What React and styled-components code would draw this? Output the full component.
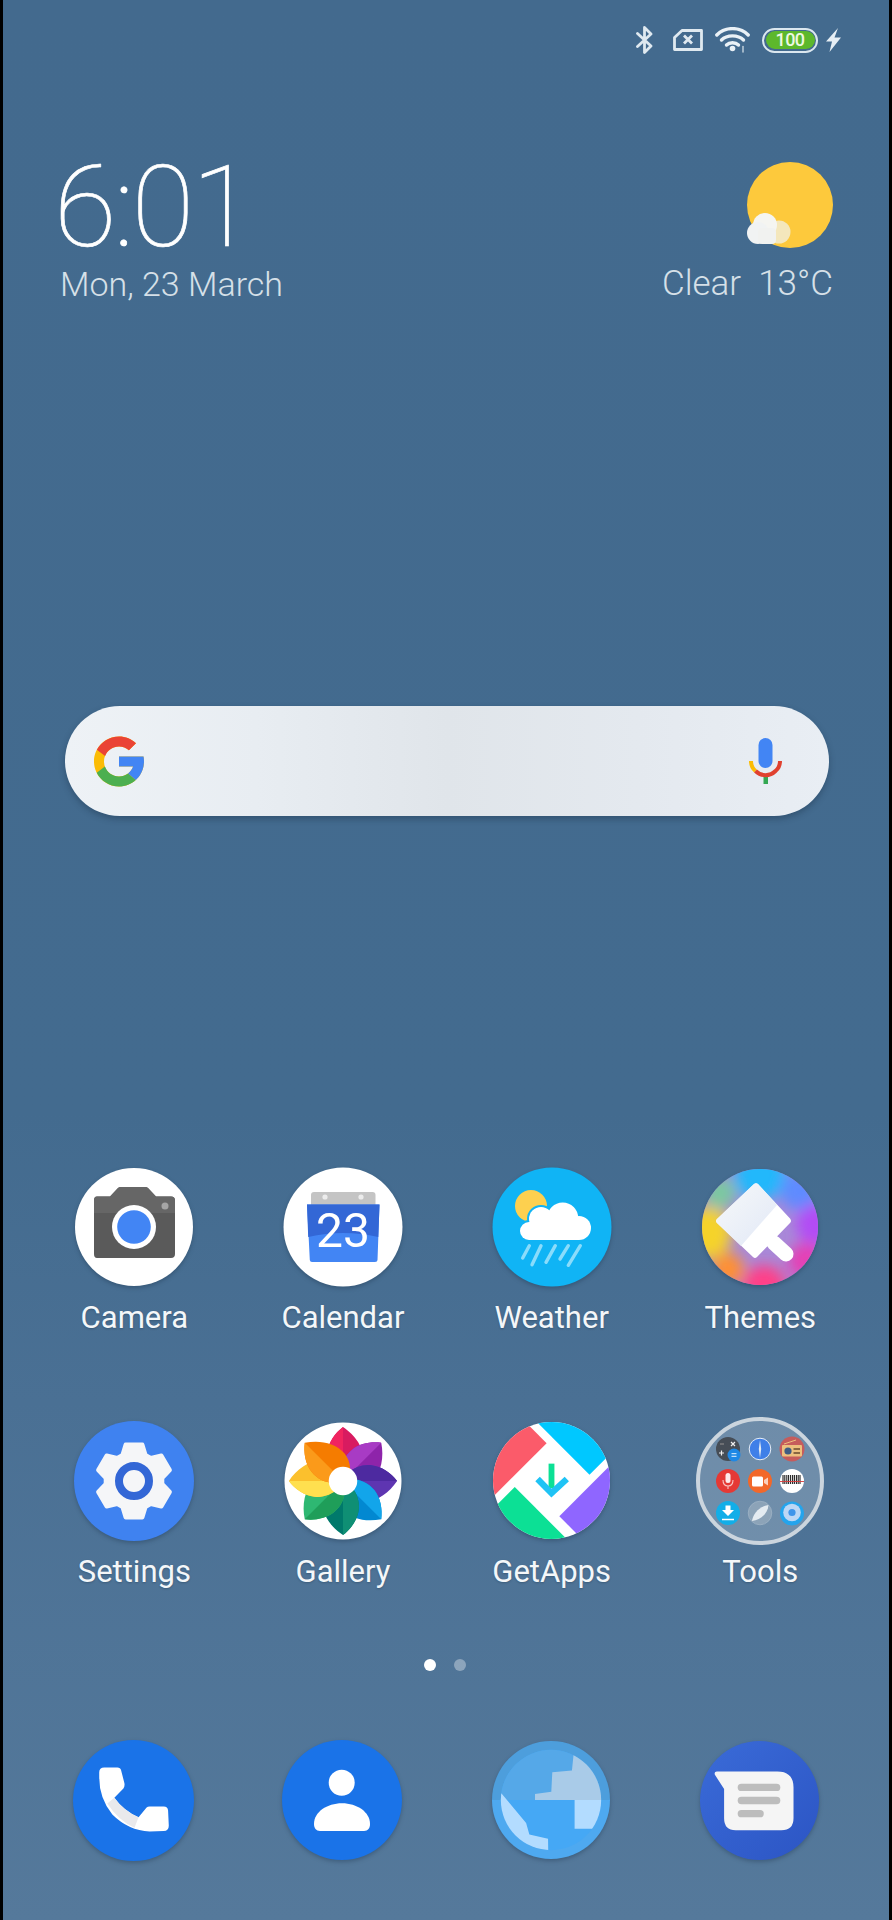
import React from 'react';
import styled, { createGlobalStyle } from 'styled-components';

const GlobalStyle = createGlobalStyle`
  html, body {
    margin: 0;
    padding: 0;
    background: #000;
  }
`;

const Screen = styled.div`
  width: 886px;
  height: 1920px;
  margin: 0 3px;
  overflow: hidden;
  font-family: Roboto, "Noto Sans", sans-serif;
  background: linear-gradient(180deg, #436a8e 0%, #436b8f 58%, #4a7094 73%, #55799b 100%);
`;

const StatusBar = styled.div`
  height: 80px;
  display: flex;
  justify-content: flex-end;
  align-items: center;
  gap: 12px;
  padding-right: 48px;
`;

const StatusIcon = styled.svg`
  display: block;
  flex: none;
  margin-right: ${(p) => p.$after || 0}px;
`;

const Battery = styled.div`
  width: 56px;
  height: 25px;
  box-sizing: border-box;
  border: 2.5px solid #dbe7ef;
  border-radius: 13px;
  padding: 1.5px;
  margin-right: -4px;
`;

const BatteryFill = styled.div`
  height: 100%;
  border-radius: 9px;
  background: #5db82c;
  color: #eef8e2;
  font-size: 18px;
  font-weight: 500;
  line-height: 17px;
  letter-spacing: -0.6px;
  text-align: center;
`;

const InfoRow = styled.div`
  display: flex;
  justify-content: space-between;
  padding: 72px 56px 0 51px;
`;

const ClockBlock = styled.div`
  display: flex;
  flex-direction: column;
`;

const Clock = styled.div`
  font-size: 114px;
  line-height: 110px;
  font-weight: 100;
  color: #fff;
  letter-spacing: -2.4px;
  -webkit-text-stroke: 0.7px #fff;
`;

const InfoText = styled.div`
  font-size: ${(p) => p.$size}px;
  line-height: 40px;
  font-weight: 300;
  color: #d6e0e8;
  white-space: pre;
  margin: ${(p) => p.$top || 0}px 0 0 ${(p) => p.$left || 0}px;
`;

const WeatherBlock = styled.div`
  display: flex;
  flex-direction: column;
  align-items: flex-end;
  padding-top: 10px;
`;

const SearchBar = styled.div`
  width: 764px;
  height: 110px;
  margin: 402px 0 0 62px;
  box-sizing: border-box;
  padding: 0 47px 0 29px;
  border-radius: 55px;
  display: flex;
  justify-content: space-between;
  align-items: center;
  background: linear-gradient(90deg, #eef2f6 0%, #e8edf2 25%, #e0e5ea 50%, #e4e9ef 75%, #e9eef4 100%);
  box-shadow: 0 3px 6px rgba(20, 40, 60, 0.35);
`;

const AppGrid = styled.div`
  display: grid;
  grid-template-columns: repeat(4, 208.67px);
  row-gap: 80.5px;
  margin: ${(p) => p.$top}px 0 0 ${(p) => p.$left}px;
`;

const AppCell = styled.div`
  display: flex;
  flex-direction: column;
  align-items: center;
`;

const IconSlot = styled.div`
  height: 128px;
  display: flex;
  align-items: center;
  justify-content: center;
`;

const AppIcon = styled.svg`
  display: block;
  overflow: visible;
  width: ${(p) => p.$size || 120}px;
  height: ${(p) => p.$size || 120}px;
  filter: ${(p) => (p.$flat ? 'none' : 'drop-shadow(0 2px 2px rgba(15, 35, 55, 0.3))')};
`;

const AppLabel = styled.div`
  margin-top: 9px;
  font-size: 31px;
  line-height: 36px;
  color: #f4f7f9;
  text-shadow: 0 1px 2px rgba(20, 40, 60, 0.3);
`;

const Dots = styled.div`
  display: flex;
  justify-content: center;
  gap: 18.5px;
  margin: 69.5px 0 0 -2px;
`;

const Dot = styled.div`
  width: 12px;
  height: 12px;
  border-radius: 50%;
  background: ${(p) => (p.$active ? '#fff' : 'rgba(255, 255, 255, 0.35)')};
`;

const gearPoints = (() => {
  const pts = [];
  for (let i = 0; i < 6; i++) {
    const a = -90 + 60 * i;
    [[-24, 28.5], [-13, 37.5], [13, 37.5], [24, 28.5]].forEach(([d, r]) => {
      const t = ((a + d) * Math.PI) / 180;
      pts.push(`${(60 + r * Math.cos(t)).toFixed(1)},${(60 + r * Math.sin(t)).toFixed(1)}`);
    });
  }
  return pts.join(' ');
})();

function BluetoothIcon() {
  return (
    <StatusIcon $after={8} width="17" height="28" viewBox="0 0 17 28" fill="none" stroke="#dfe9f0" strokeWidth="2.8" strokeLinejoin="round" strokeLinecap="round">
      <path d="M1.5 7.5 15 20 8.5 26.5V1.5L15 8 1.5 20.5" />
    </StatusIcon>
  );
}

function SimIcon() {
  return (
    <StatusIcon width="30" height="22" viewBox="0 0 30 22" fill="none" stroke="#dfe9f0" strokeWidth="2.8" strokeLinejoin="round">
      <path d="M9 1.5H28.5V20.5H1.5V8.5Z" />
      <path d="M11 6.5 19 14.5M19 6.5 11 14.5" />
    </StatusIcon>
  );
}

function WifiIcon() {
  return (
    <StatusIcon width="35" height="26" viewBox="0 0 35 26" fill="none" stroke="#eaf1f6" strokeWidth="3.4" strokeLinecap="round">
      <path d="M1.8 8C10 -0.5 25 -0.5 33.2 8" />
      <path d="M6.5 13C12 7.5 23 7.5 28.5 13" />
      <path d="M11.5 18C14.5 15 20.5 15 23.5 18" />
      <circle cx="17.5" cy="21.5" r="2.8" fill="#eaf1f6" stroke="none" />
      <path d="M28 19.5V25" strokeWidth="1.6" stroke="#b8c9d6" />
    </StatusIcon>
  );
}

function BoltIcon() {
  return (
    <StatusIcon width="15" height="24" viewBox="0 0 15 24" fill="#e6eef4">
      <path d="M12 0 0 13.5H6L3.5 24 15 9.5H8.5Z" />
    </StatusIcon>
  );
}

function SunIcon() {
  return (
    <svg width="86" height="86" viewBox="0 0 86 86" style={{ display: 'block' }}>
      <circle cx="43" cy="43" r="43" fill="#fdc93c" />
      <circle cx="32" cy="70" r="11.5" fill="#f2ecd2" opacity="0.85" />
      <circle cx="18" cy="63" r="12" fill="#f5f5f1" />
      <circle cx="11" cy="71" r="11" fill="#f1f3f3" />
      <rect x="11" y="66" width="18" height="16" rx="4" fill="#f1f2f0" />
    </svg>
  );
}

function GoogleLogo() {
  return (
    <svg width="50" height="51" viewBox="4 4 40 40" style={{ display: 'block' }}>
      <path fill="#fbbc05" d="M43.611,20.083H42V20H24v8h11.303c-1.649,4.657-6.08,8-11.303,8c-6.627,0-12-5.373-12-12c0-6.627,5.373-12,12-12c3.059,0,5.842,1.154,7.961,3.039l5.657-5.657C34.046,6.053,29.268,4,24,4C12.955,4,4,12.955,4,24c0,11.045,8.955,20,20,20c11.045,0,20-8.955,20-20C44,22.659,43.862,21.35,43.611,20.083z" />
      <path fill="#ea4335" d="M6.306,14.691l6.571,4.819C14.655,15.108,18.961,12,24,12c3.059,0,5.842,1.154,7.961,3.039l5.657-5.657C34.046,6.053,29.268,4,24,4C16.318,4,9.656,8.337,6.306,14.691z" />
      <path fill="#4caf50" d="M24,44c5.166,0,9.86-1.977,13.409-5.192l-6.19-5.238C29.211,35.091,26.715,36,24,36c-5.202,0-9.619-3.317-11.283-7.946l-6.522,5.025C9.505,39.556,16.227,44,24,44z" />
      <path fill="#4285f4" d="M43.611,20.083H42V20H24v8h11.303c-0.792,2.237-2.231,4.166-4.087,5.571c0.001-0.001,0.002-0.001,0.003-0.002l6.19,5.238C36.971,39.205,44,34,44,24C44,22.659,43.862,21.35,43.611,20.083z" />
    </svg>
  );
}

function MicIcon() {
  return (
    <svg width="33" height="46" viewBox="0 0 33 46" style={{ display: 'block' }}>
      <rect x="14.5" y="36" width="4.5" height="10" fill="#34a853" />
      <path d="M2 23C2 27 3.5 30.5 6.5 33" fill="none" stroke="#fbbc05" strokeWidth="4" />
      <path d="M6.5 33C12 38.5 21 38.5 26.5 33C29.5 30.5 31 27 31 23" fill="none" stroke="#e0412f" strokeWidth="4" />
      <rect x="9.5" y="0" width="14" height="30" rx="7" fill="#4285f4" />
    </svg>
  );
}

function CameraIcon() {
  return (
    <AppIcon viewBox="0 0 120 120">
      <circle cx="60" cy="60" r="59" fill="#fff" />
      <path d="M23 29.5H36L44 21Q45 20 47 20H71Q73 20 74 21L82 29.5H97Q101 29.5 101 33.5V87Q101 91 97 91H23Q20 91 20 87V33.5Q20 29.5 23 29.5Z" fill="#5a5a5a" />
      <path d="M23 29.5H36L44 21Q45 20 47 20H71Q73 20 74 21L82 29.5H97Q101 29.5 101 33.5V46H20V33.5Q20 29.5 23 29.5Z" fill="#666" />
      <circle cx="91" cy="39" r="3.5" fill="#a5a5a5" />
      <circle cx="60" cy="60" r="22" fill="#fff" />
      <circle cx="60" cy="60" r="16.8" fill="#4285f4" />
    </AppIcon>
  );
}

function CalendarIcon() {
  return (
    <AppIcon viewBox="0 0 120 120">
      <circle cx="60" cy="60" r="59.5" fill="#fff" />
      <rect x="28" y="25" width="64.5" height="24" rx="3" fill="#c4c4c4" />
      <circle cx="42" cy="30" r="2.6" fill="#ececec" />
      <circle cx="78" cy="30" r="2.6" fill="#ececec" />
      <path d="M24 37.5H96.5L94.5 93Q94.5 95 92 95H29Q27 95 26.8 93Z" fill="#4285f4" />
      <path d="M24 37.5H96.5L95.3 70Q60 62 25.2 70Z" fill="#3367d6" />
      <text x="60" y="80" textAnchor="middle" fontFamily="Roboto, sans-serif" fontSize="48" fill="#fff">23</text>
    </AppIcon>
  );
}

const cloudShape = (
  <>
    <circle cx="49" cy="52" r="12" />
    <circle cx="70.7" cy="51" r="15.5" />
    <circle cx="87" cy="61" r="12" />
    <circle cx="37" cy="64" r="9" />
    <rect x="37" y="55" width="50" height="18" />
  </>
);

function WeatherIcon() {
  return (
    <AppIcon viewBox="0 0 120 120">
      <circle cx="60" cy="60" r="59.5" fill="#10b4f5" />
      <circle cx="39" cy="39" r="16" fill="#fdd04f" />
      <g fill="#10b4f5" stroke="#10b4f5" strokeWidth="4">{cloudShape}</g>
      <g fill="#fff">{cloudShape}</g>
      <g stroke="#8adcfb" strokeWidth="3.4" strokeLinecap="round">
        <path d="M37.3 78.7 30.7 91" />
        <path d="M49 78.7 40 97.7" />
        <path d="M63.3 78.7 54 95.3" />
        <path d="M76.3 78.7 68 92" />
        <path d="M88.3 78.7 76.3 98.3" />
      </g>
    </AppIcon>
  );
}

function ThemesIcon() {
  return (
    <AppIcon $size={116} viewBox="0 0 116 116">
      <defs>
        <clipPath id="themesClip"><circle cx="58" cy="58" r="58" /></clipPath>
        <filter id="themesBlur" x="-30%" y="-30%" width="160%" height="160%"><feGaussianBlur stdDeviation="7" /></filter>
        <linearGradient id="brushTop" x1="0" y1="0" x2="1" y2="1">
          <stop offset="0" stopColor="#f4f7f8" stopOpacity="0.82" />
          <stop offset="1" stopColor="#dfe6f6" stopOpacity="0.95" />
        </linearGradient>
      </defs>
      <g clipPath="url(#themesClip)">
        <rect width="116" height="116" fill="#a889d8" />
        <g filter="url(#themesBlur)">
          <circle cx="58" cy="6" r="26" fill="#22b8fb" />
          <circle cx="98" cy="22" r="20" fill="#5f8bff" />
          <circle cx="114" cy="55" r="20" fill="#b24cf5" />
          <circle cx="104" cy="92" r="18" fill="#e53fb5" />
          <circle cx="62" cy="118" r="22" fill="#ff3f88" />
          <circle cx="26" cy="100" r="16" fill="#ff9033" />
          <circle cx="4" cy="64" r="26" fill="#f5d32b" />
          <circle cx="18" cy="24" r="16" fill="#7cc9a0" />
        </g>
      </g>
      <path d="M72 74 84 85" stroke="#fff" strokeWidth="15" strokeLinecap="round" />
      <path d="M52 15Q54 13.5 56 15L88 49.5Q90 52 88 54L55 88Q53 90 51 88L15 54Q13 52 15 50Z" fill="#fff" />
      <path d="M52 15Q54 13.5 56 15L75 36 39 77 15 54Q13 52 15 50Z" fill="url(#brushTop)" />
    </AppIcon>
  );
}

function SettingsIcon() {
  return (
    <AppIcon viewBox="0 0 120 120">
      <circle cx="60" cy="60" r="60" fill="#3f82f0" />
      <polygon points={gearPoints} fill="#f5f6f8" stroke="#f5f6f8" strokeWidth="4" strokeLinejoin="round" />
      <circle cx="60" cy="60" r="15" fill="#f5f6f8" stroke="#3367d6" strokeWidth="8" />
    </AppIcon>
  );
}

const petals = [
  ['#d81b60', '#f0245f'],
  ['#8e24aa', '#a83bc4'],
  ['#5e35b1', '#4d2aa0'],
  ['#0288d1', '#12a5ea'],
  ['#00796b', '#0f8f74'],
  ['#2eb872', '#1f9e59'],
  ['#fbc02d', '#ffe04f'],
  ['#f57c00', '#fb9a1a'],
];

function GalleryIcon() {
  return (
    <AppIcon $size={118} viewBox="0 0 120 120">
      <circle cx="60" cy="60" r="59.5" fill="#fff" />
      {petals.map(([dark, light], i) => (
        <g key={dark} transform={`rotate(${i * 45} 60 60)`}>
          <path d="M60 5C72 13 82 26 81 41C80 50 75 57 67 62L52 55C46 48 43 40 44 31C45 21 52 11 60 5Z" fill={dark} />
          <path d="M60 5C52 11 45 21 44 31C43 40 46 48 52 55L60 58Z" fill={light} />
        </g>
      ))}
      <circle cx="60" cy="60" r="14.5" fill="#fff" />
    </AppIcon>
  );
}

function GetAppsIcon() {
  return (
    <AppIcon $size={117} viewBox="0 0 120 120">
      <defs>
        <clipPath id="getAppsClip"><circle cx="60" cy="60" r="60" /></clipPath>
      </defs>
      <g clipPath="url(#getAppsClip)">
        <rect width="120" height="120" fill="#fff" />
        <polygon points="33.3,0 55,21.7 0,76.7 0,0" fill="#fb5b6a" />
        <polygon points="45,0 99,54 120,33 120,0" fill="#00c8ff" />
        <polygon points="68,96.7 120,44.7 120,120 91.3,120" fill="#8f66ff" />
        <polygon points="22.3,66.7 0,89 0,120 75.6,120" fill="#0ce095" />
      </g>
      <path d="M60 42.7V68" stroke="#0ce095" strokeWidth="6" fill="none" />
      <path d="M45.7 58.5 60 73 75.7 58.5" stroke="#1fc3f5" strokeWidth="6.5" fill="none" />
    </AppIcon>
  );
}

function ToolsIcon() {
  return (
    <AppIcon $size={128} $flat viewBox="0 0 128 128">
      <circle cx="64" cy="64" r="62" fill="rgba(255,255,255,0.2)" stroke="#cbd5de" strokeWidth="4" />
      {/* calculator */}
      <circle cx="32" cy="32" r="12" fill="#464d56" />
      <circle cx="38" cy="38" r="6.5" fill="#1e88e5" />
      <path d="M35.5 36.7H40.5M35.5 39.3H40.5" stroke="#fff" strokeWidth="0.9" />
      <path d="M35 25 39 29M39 25 35 29M23 36H28M25.5 33.5V38.5" stroke="#eee" strokeWidth="1.2" />
      <path d="M24 27H28" stroke="#888" strokeWidth="1.2" />
      {/* compass */}
      <circle cx="64" cy="32" r="10.8" fill="#3f7fe8" stroke="#e8eef5" strokeWidth="1" />
      <path d="M64 23 65.2 32 64 41 62.8 32Z" fill="#dfe9f5" />
      {/* radio */}
      <circle cx="96" cy="32" r="12.5" fill="#c65c5c" />
      <rect x="86" y="28" width="20" height="11.5" rx="1" fill="#edc07e" />
      <circle cx="92" cy="34" r="3.6" fill="#3f5c84" />
      <path d="M97.5 32H104M97.5 36H104" stroke="#6a4a2e" strokeWidth="1.5" />
      <path d="M88 27 100 23" stroke="#edc07e" strokeWidth="1" />
      {/* recorder */}
      <circle cx="32" cy="64" r="12" fill="#e53935" />
      <rect x="29.5" y="56" width="5" height="10" rx="2.5" fill="#fff" opacity="0.9" />
      <path d="M27 63Q27 69 32 69Q37 69 37 63M32 69V72" fill="none" stroke="#f7c6c4" strokeWidth="1.1" />
      {/* screen recorder */}
      <circle cx="64" cy="64" r="12" fill="#f2682a" />
      <rect x="56" y="59.5" width="11" height="10" rx="1.5" fill="#fff" />
      <path d="M68 63 72 60.5V68.5L68 66Z" fill="#fbd0bc" />
      {/* scanner */}
      <circle cx="96" cy="64" r="12" fill="#fff" />
      <path d="M87 58V67M88.8 58V67M90.8 58V67M92.6 58V67M94.6 58V67M96.6 58V67M98.4 58V67M100.4 58V67M102.2 58V67M104 58V67" stroke="#222" strokeWidth="1.1" />
      <path d="M84 64.5H108" stroke="#d83a3a" strokeWidth="0.9" />
      {/* downloads */}
      <circle cx="32" cy="96" r="12" fill="#12aee8" />
      <path d="M29.5 88.5H34.5V93H38L32 99 26 93H29.5Z" fill="#fff" />
      <path d="M26 102.5H38" stroke="#fff" strokeWidth="1.5" />
      {/* browser */}
      <circle cx="64" cy="96" r="11.8" fill="#8ca3b8" stroke="#a8bbcb" strokeWidth="0.6" />
      <path d="M56 104C57 96 64 89 72.5 88C72 96 65 103 56 104Z" fill="#e4ebf1" />
      {/* remote */}
      <circle cx="96" cy="96.5" r="12" fill="#24a4ec" />
      <circle cx="96" cy="95.5" r="8.8" fill="#bcd7f5" />
      <circle cx="96" cy="95.5" r="3.6" fill="#3f95ea" />
    </AppIcon>
  );
}

function PhoneIcon() {
  return (
    <AppIcon $size={121} viewBox="0 0 120 120">
      <circle cx="60" cy="60" r="60" fill="#1a73e8" />
      <path d="M31 27.3H44Q47 27.3 47.7 30L51 43Q51.5 46 50 48L41 57.3Q50 70 65 76.7L73 67Q74 66 76 66H90Q94 66 94.3 70L95 85Q95 90 90 90.3L76 90.7Q55 90 39 74Q26 58 26 37V32Q26 27.3 31 27.3Z" fill="#fff" />
      <path d="M41 57.3Q50 70 65 76.7L61 87Q45 80 34 63Z" fill="#e9e9ec" />
    </AppIcon>
  );
}

function ContactsIcon() {
  return (
    <AppIcon viewBox="0 0 120 120">
      <circle cx="60" cy="60" r="60" fill="#1a73e8" />
      <circle cx="59.7" cy="42.7" r="13" fill="#fff" />
      <path d="M32 84C32 72 45 63.3 60 63.3C75 63.3 88 72 88 84C88 88 86 91 82 91H38C34 91 32 88 32 84Z" fill="#fff" />
    </AppIcon>
  );
}

function BrowserIcon() {
  return (
    <AppIcon $size={118} viewBox="0 0 120 120">
      <defs>
        <clipPath id="browserLand"><circle cx="60" cy="60" r="51" /></clipPath>
      </defs>
      <path d="M0 60A60 60 0 0 1 120 60Z" fill="#4d9edc" />
      <path d="M0 60A60 60 0 0 0 120 60Z" fill="#4ea9f0" />
      <circle cx="60" cy="60" r="51" fill="#45a8f5" />
      <path d="M9 60A51 51 0 0 1 111 60Z" fill="#55a8e8" />
      <g clipPath="url(#browserLand)">
        <polygon points="83,13.3 81.3,30 61.3,31.7 60.3,51.7 43.7,54 43.7,60 120,60 120,0 83,0" fill="#a9cbe8" />
        <polygon points="84,60 84,89.3 120,89.3 120,60" fill="#b3dcff" />
        <polygon points="9.7,53.3 34.7,83.3 38,95 57,99.3 57.3,120 0,120 0,53.3" fill="#b3dcff" />
      </g>
    </AppIcon>
  );
}

function MessagesIcon() {
  return (
    <AppIcon $size={119} viewBox="0 0 120 120">
      <defs>
        <linearGradient id="messagesBg" x1="0" y1="0" x2="1" y2="1">
          <stop offset="0" stopColor="#3a6bd8" />
          <stop offset="1" stopColor="#2c55c4" />
        </linearGradient>
      </defs>
      <circle cx="60" cy="60" r="60" fill="url(#messagesBg)" />
      <path d="M17 30.7H78Q94.3 30.7 94.3 47V78Q94.3 90 82 90H36Q24.3 90 24.3 78V48.3L15 34Q14 30.7 17 30.7Z" fill="#f5f5f5" />
      <g fill="#bdbdbd">
        <rect x="38" y="43" width="43" height="7.5" rx="3.7" />
        <rect x="38" y="56.3" width="43" height="7.5" rx="3.7" />
        <rect x="38" y="69.5" width="26.3" height="7.5" rx="3.7" />
      </g>
    </AppIcon>
  );
}

const homeApps = [
  { label: 'Camera', Icon: CameraIcon },
  { label: 'Calendar', Icon: CalendarIcon },
  { label: 'Weather', Icon: WeatherIcon },
  { label: 'Themes', Icon: ThemesIcon },
  { label: 'Settings', Icon: SettingsIcon },
  { label: 'Gallery', Icon: GalleryIcon },
  { label: 'GetApps', Icon: GetAppsIcon },
  { label: 'Tools', Icon: ToolsIcon },
];

const dockApps = [PhoneIcon, ContactsIcon, BrowserIcon, MessagesIcon];

export default function App() {
  return (
    <Screen>
      <GlobalStyle />
      <StatusBar>
        <BluetoothIcon />
        <SimIcon />
        <WifiIcon />
        <Battery>
          <BatteryFill>100</BatteryFill>
        </Battery>
        <BoltIcon />
      </StatusBar>

      <InfoRow>
        <ClockBlock>
          <Clock>6:01</Clock>
          <InfoText $size={34} $top={2} $left={6}>Mon, 23 March</InfoText>
        </ClockBlock>
        <WeatherBlock>
          <SunIcon />
          <InfoText $size={35} $top={16}>Clear  13°C</InfoText>
        </WeatherBlock>
      </InfoRow>

      <SearchBar>
        <GoogleLogo />
        <MicIcon />
      </SearchBar>

      <AppGrid $top={347} $left={27}>
        {homeApps.map(({ label, Icon }) => (
          <AppCell key={label}>
            <IconSlot>
              <Icon />
            </IconSlot>
            <AppLabel>{label}</AppLabel>
          </AppCell>
        ))}
      </AppGrid>

      <Dots>
        <Dot $active />
        <Dot />
      </Dots>

      <AppGrid $top={65} $left={26}>
        {dockApps.map((Icon, i) => (
          <AppCell key={i}>
            <IconSlot>
              <Icon />
            </IconSlot>
          </AppCell>
        ))}
      </AppGrid>
    </Screen>
  );
}
